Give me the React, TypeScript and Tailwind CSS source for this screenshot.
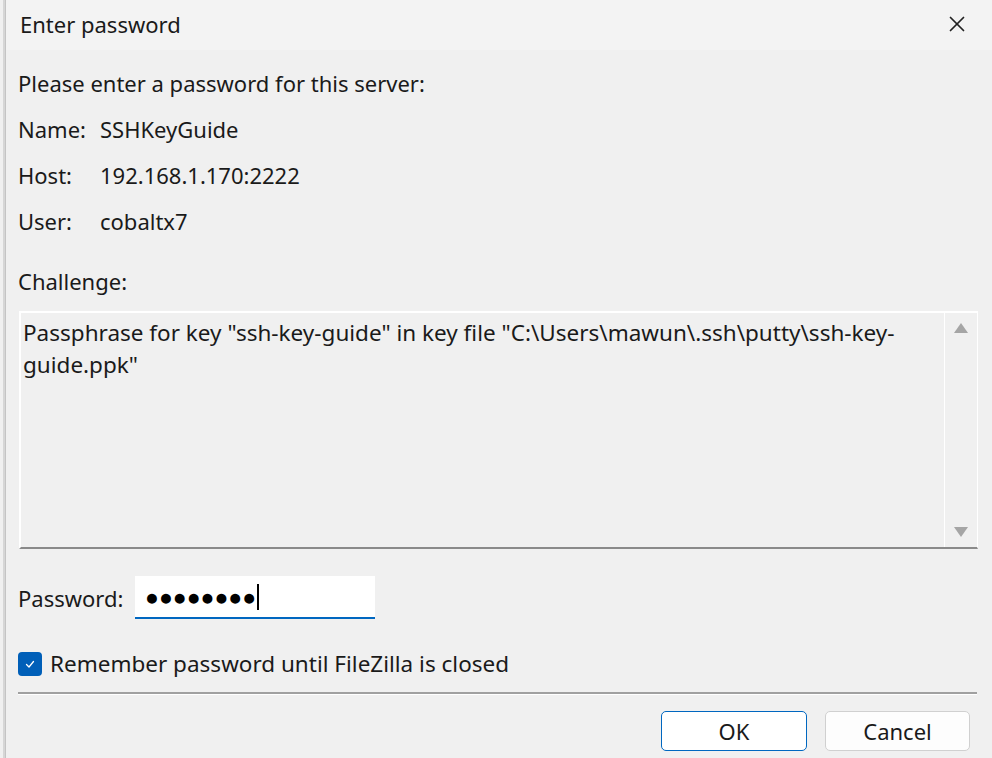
import { X } from "lucide-react";

const FIELDS = [
  { label: "Name:", value: "SSHKeyGuide" },
  { label: "Host:", value: "192.168.1.170:2222" },
  { label: "User:", value: "cobaltx7" },
];

export default function App() {
  return (
    <div
      className="flex h-[758px] w-[992px] overflow-hidden bg-[#f0f0f0] text-[22px] text-[#1a1a1a]"
      style={{ fontFamily: '"Noto Sans", "Open Sans", sans-serif' }}
    >
      {/* window left edge */}
      <div className="w-[6px] shrink-0 border-l-[3px] border-r-[1px] border-l-[#f0f0f0] border-r-[#c4c4c4] bg-[#d6d6d6]" />

      <div className="flex min-w-0 flex-1 flex-col">
        {/* title bar */}
        <div className="flex h-[50px] shrink-0 items-center justify-between bg-[#f3f3f3] pb-[3px] pl-[14px] pr-[22px]">
          <span className="text-[22px] leading-none">Enter password</span>
          <X className="h-[26px] w-[26px] text-[#222]" strokeWidth={1.6} />
        </div>

        <div className="flex flex-1 flex-col pl-[12px] pr-[14px]">
          <div className="mt-[19px] leading-[28px]">Please enter a password for this server:</div>

          <div className="mt-[18px] flex flex-col gap-[18px]">
            {FIELDS.map((f) => (
              <div key={f.label} className="flex leading-[28px]">
                <span className="w-[82px]">{f.label}</span>
                <span>{f.value}</span>
              </div>
            ))}
          </div>

          <div className="mt-[32px] leading-[28px]">Challenge:</div>

          {/* challenge text box */}
          <div className="mt-[16px] ml-[1px] flex h-[238px] border-t-2 border-l-2 border-b-2 border-r border-t-white border-l-white border-b-[#8a8a8a] border-r-white">
            <div className="flex-1 px-[2px] pt-[4px] text-[22.5px] leading-[32px]">
              Passphrase for key "ssh-key-guide" in key file "C:\Users\mawun\.ssh\putty\ssh-key-
              <br />
              guide.ppk"
            </div>
            <div className="flex w-[33px] flex-col items-center justify-between border-l border-l-white py-[10px]">
              <svg width="14" height="10" viewBox="0 0 14 10">
                <path d="M7 0 L14 10 L0 10 Z" fill="#a5a5a5" />
              </svg>
              <svg width="14" height="10" viewBox="0 0 14 10">
                <path d="M0 0 L14 0 L7 10 Z" fill="#a5a5a5" />
              </svg>
            </div>
          </div>

          {/* password */}
          <div className="mt-[27px] flex items-center">
            <span className="w-[117px] leading-[28px]">Password:</span>
            <div className="flex h-[43px] w-[240px] items-center border-b-2 border-b-[#0067c0] bg-white pl-[10px]">
              <span className="text-[23px] leading-none tracking-[0px] text-black">●●●●●●●●</span>
              <span className="ml-[1px] h-[26px] w-[2px] bg-black" />
            </div>
          </div>

          {/* remember */}
          <div className="mt-[31px] flex items-center gap-[8px]">
            <div className="flex h-[24px] w-[24px] items-center justify-center rounded-[4px] bg-[#005fb8]">
              <svg width="14" height="14" viewBox="0 0 14 14">
                <path d="M3.5 7.5 L6 10 L10.5 4.5" fill="none" stroke="white" strokeWidth="1.3" strokeLinecap="round" strokeLinejoin="round" />
              </svg>
            </div>
            <span className="text-[22.5px] leading-[28px]">Remember password until FileZilla is closed</span>
          </div>

          {/* separator */}
          <div className="mt-[14px] mr-[1px] border-t-2 border-b border-t-[#a0a0a0] border-b-white" />

          {/* buttons */}
          <div className="mt-[16px] flex justify-end gap-[18px] pr-[8px]">
            <button className="h-[40px] w-[146px] rounded-[5px] border border-[#0067c0] bg-white text-[22px] leading-none">
              OK
            </button>
            <button className="h-[40px] w-[145px] rounded-[5px] border border-[#d0d0d0] bg-[#fdfdfd] text-[22px] leading-none">
              Cancel
            </button>
          </div>
        </div>
      </div>
    </div>
  );
}
